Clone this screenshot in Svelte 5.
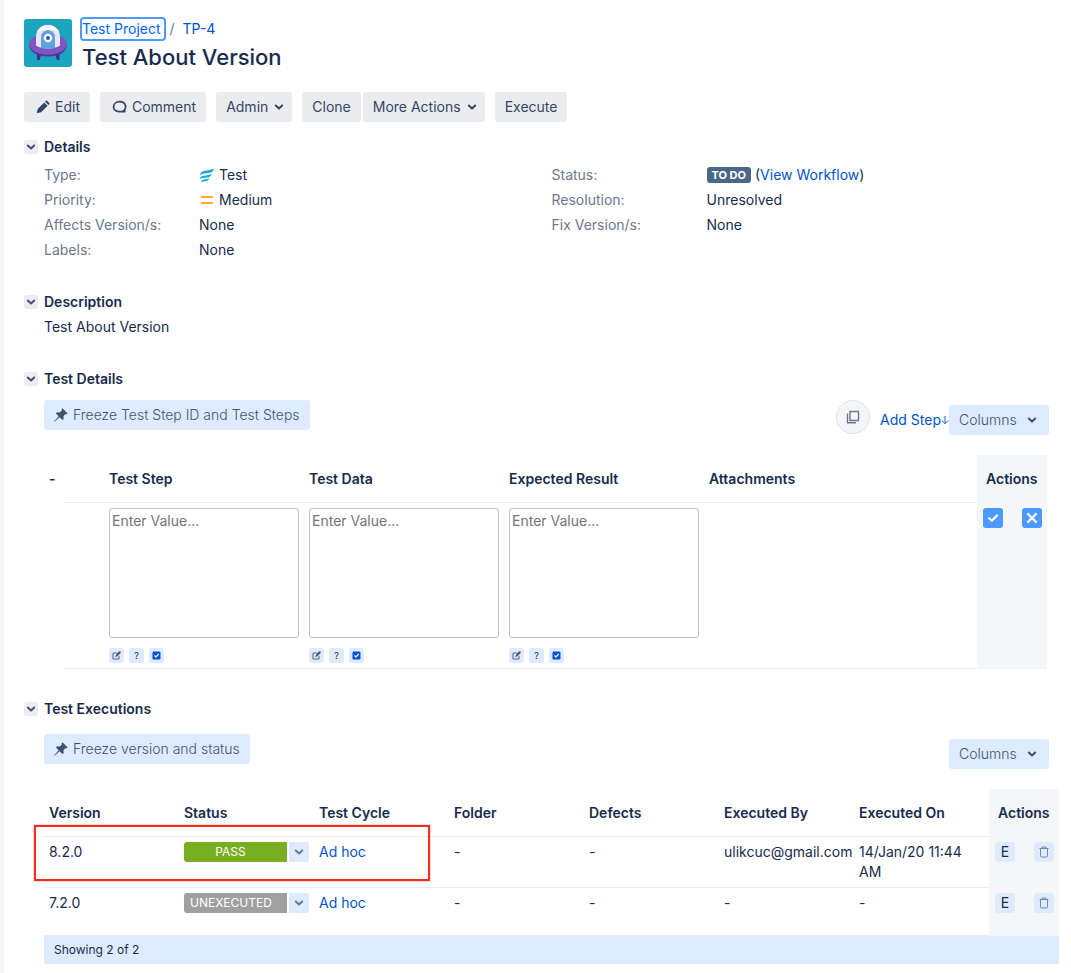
<script>
  const leftFields = [
    { label: 'Type:', value: 'Test', icon: 'test' },
    { label: 'Priority:', value: 'Medium', icon: 'medium' },
    { label: 'Affects Version/s:', value: 'None' },
    { label: 'Labels:', value: 'None' }
  ];
  const inputs = ['Test Step', 'Test Data', 'Expected Result'];
  const executions = [
    { version: '8.2.0', status: 'PASS', by: 'ulikcuc@gmail.com', on: '14/Jan/20 11:44 AM' },
    { version: '7.2.0', status: 'UNEXECUTED', by: '-', on: '-' }
  ];
  let open = $state({ details: true, description: true, steps: true, executions: true });
</script>

{#snippet chevron()}
  <svg class="chevron" viewBox="0 0 10 10" width="10" height="10" aria-hidden="true">
    <path d="M1.8 3.5 5 6.5 8.2 3.5" fill="none" stroke="currentColor" stroke-width="2" stroke-linecap="round" stroke-linejoin="round" />
  </svg>
{/snippet}

{#snippet pin()}
  <svg viewBox="0 0 14 14" width="14" height="14" aria-hidden="true">
    <path d="M8.4.3 13.7 5.6 12.4 6.4 11.6 6.1 9.4 8.3 9.7 11 8.6 12.1 5.6 9.2.4 13.8 0 13.4 4.7 8.3 1.9 5.4 3 4.3 5.7 4.6 7.9 2.4 7.5 1.5Z" fill="currentColor" />
  </svg>
{/snippet}

{#snippet heading(key, text)}
  <div class="heading">
    <button class="toggle" aria-label={text} aria-expanded={open[key]} onclick={() => (open[key] = !open[key])}>{@render chevron()}</button>
    <h2>{text}</h2>
  </div>
{/snippet}

<main>
  <header>
    <svg class="avatar" viewBox="0 0 48 48" width="48" height="48" aria-hidden="true">
      <rect width="48" height="48" rx="3" fill="#1ba5bf" />
      <path d="M13 34h3.500v4l-1 3H13zM32 34h3.500v7H33l-1-3z" fill="#452a92" />
      <path d="M5 25c0 8 8 12.500 19 12.500S43 33 43 25Z" fill="#5335a2" />
      <ellipse cx="24" cy="25" rx="19" ry="10.500" fill="#7e57c2" />
      <path d="M12 26.500V18c0-16 24-16 24 0v8.500c-5 4-19 4-24 0Z" fill="#e9e3f4" />
      <path d="M12.800 13.500c3.200-10 19.200-10 22.400 0-5-4-17.400-4-22.400 0Z" fill="#fff" />
      <path d="M17 29V18c0-9 14-9 14 0v11c-4 1-10 1-14 0Z" fill="#5da3dc" />
      <circle cx="24" cy="19" r="4.200" fill="#fff" />
      <circle cx="24" cy="19" r="2" fill="#315a9d" />
    </svg>
    <div>
      <nav aria-label="Breadcrumb"><a class="focused" href="#project">Test Project</a><span>/</span><a href="#issue">TP-4</a></nav>
      <h1>Test About Version</h1>
    </div>
  </header>

  <div class="operations">
    <button class="op with-icon">
      <svg viewBox="0 0 14 14" width="14" height="14" aria-hidden="true">
        <path d="M.7 13.300 1.700 8.900 8.200 2.400 11.600 5.800 5.100 12.300ZM9 1.600l.9-.9q.6-.6 1.200 0l2.200 2.200q.6.6 0 1.200l-.9.9Z" fill="currentColor" />
      </svg>Edit
    </button>
    <button class="op with-icon">
      <svg viewBox="0 0 15 14" width="15" height="14" aria-hidden="true">
        <path d="M11.300 11.100c4-3 2.700-9.400-3.800-9.400C.1 1.700-.9 11.700 7.500 11.700h5.400q-1.500-.3-1.600-1.600" fill="none" stroke="currentColor" stroke-width="1.700" stroke-linejoin="round" />
      </svg>Comment
    </button>
    <button class="op menu">Admin {@render chevron()}</button>
    <div class="joined">
      <button class="op">Clone</button>
      <button class="op menu">More Actions {@render chevron()}</button>
    </div>
    <button class="op">Execute</button>
  </div>

  <section class="details">
    {@render heading('details', 'Details')}
    {#if open.details}
      <div class="fields">
        <dl>
          {#each leftFields as field}
            <div>
              <dt>{field.label}</dt>
              <dd>
                {#if field.icon === 'test'}
                  <svg viewBox="0 0 16 16" width="16" height="16" aria-hidden="true">
                    <g fill="#1ca9dc">
                      <path d="M1 8C2 2.500 8 4.500 15 1.500c-1 6-8 3.500-14 6.500Z" />
                      <path d="M.8 12c1-4.700 6-2.600 12-5-1.200 5-6.500 2.700-12 5Z" />
                      <path d="M2 15.300c.8-3.800 4-2.100 8.200-4-1 4-4.500 2.300-8.200 4Z" />
                    </g>
                  </svg>
                {:else if field.icon === 'medium'}
                  <svg viewBox="0 0 16 16" width="16" height="16" aria-hidden="true">
                    <path d="M2 5h12M2 11h12" stroke="#ffab2b" stroke-width="2" />
                  </svg>
                {/if}
                {field.value}
              </dd>
            </div>
          {/each}
        </dl>
        <dl>
          <div><dt>Status:</dt><dd><span class="lozenge">TO DO</span><span>(<a href="#workflow">View Workflow</a>)</span></dd></div>
          <div><dt>Resolution:</dt><dd>Unresolved</dd></div>
          <div><dt>Fix Version/s:</dt><dd>None</dd></div>
        </dl>
      </div>
    {/if}
  </section>

  <section class="description">
    {@render heading('description', 'Description')}
    {#if open.description}<p>Test About Version</p>{/if}
  </section>

  <section class="steps">
    {@render heading('steps', 'Test Details')}
    {#if open.steps}
      <div class="toolbar">
        <button class="soft">{@render pin()}Freeze Test Step ID and Test Steps</button>
        <div class="right">
          <button class="round" aria-label="Expand">
            <svg viewBox="0 0 14 14" width="14" height="14" aria-hidden="true">
              <path d="M4 1.500h8.500v9H4ZM1.500 3.500v9.300H10" fill="none" stroke="currentColor" stroke-width="1.400" />
            </svg>
          </button>
          <a class="add" href="#add">Add Step<svg viewBox="0 0 9 10" width="8" height="10" aria-hidden="true"><path d="M4.500.5v8.500M.8 5.500l3.700 3.700 3.700-3.700" fill="none" stroke="currentColor" /></svg></a>
          <button class="soft columns">Columns {@render chevron()}</button>
        </div>
      </div>
      <table class="step-table">
        <colgroup><col class="c-dash" /><col class="c-order" /><col class="c-input" /><col class="c-input" /><col class="c-input" /><col /><col class="c-actions" /></colgroup>
        <thead>
          <tr><th class="bare">-</th><th></th>{#each inputs as name}<th>{name}</th>{/each}<th>Attachments</th><th class="actions">Actions</th></tr>
        </thead>
        <tbody>
          <tr>
            <td class="bare"></td><td></td>
            {#each inputs as name}
              <td>
                <textarea aria-label={name} placeholder="Enter Value..."></textarea>
                <div class="tools">
                  <button aria-label="Edit {name}">
                    <svg viewBox="0 0 9 9" width="9" height="9" aria-hidden="true"><path d="M5 2H1v6h6V5M4 5.300 8 1" fill="none" stroke="#42526e" stroke-width=".9" /><path d="M6.500.8 8.500 0v2.200L5 5.500 3.500 5.800 4 4Z" fill="#42526e" /></svg>
                  </button>
                  <button aria-label="Help for {name}">?</button>
                  <button aria-label="Preview {name}">
                    <svg viewBox="0 0 9 9" width="9" height="9" aria-hidden="true"><rect x=".5" y=".5" width="8" height="8" rx="1.200" fill="#0052cc" /><path d="M2.500 4.500 4 6l2.700-3" fill="none" stroke="#fff" stroke-width="1.200" /></svg>
                  </button>
                </div>
              </td>
            {/each}
            <td></td>
            <td class="actions">
              <div class="pair">
                <button class="solid" aria-label="Save step"><svg viewBox="0 0 12 12" width="12" height="12" aria-hidden="true"><path d="M2 6.200 4.800 8.700 10 3.500" fill="none" stroke="#fff" stroke-width="2.200" stroke-linecap="round" stroke-linejoin="round" /></svg></button>
                <button class="solid" aria-label="Cancel step"><svg viewBox="0 0 12 12" width="12" height="12" aria-hidden="true"><path d="M2 2l8 8M10 2l-8 8" stroke="#fff" stroke-width="2.200" stroke-linecap="round" /></svg></button>
              </div>
            </td>
          </tr>
        </tbody>
      </table>
    {/if}
  </section>

  <section class="executions">
    {@render heading('executions', 'Test Executions')}
    {#if open.executions}
      <div class="toolbar">
        <button class="soft">{@render pin()}Freeze version and status</button>
        <div class="right"><button class="soft columns">Columns {@render chevron()}</button></div>
      </div>
      <div class="framed">
        <table class="run-table">
          <colgroup><col span="7" /><col class="c-actions" /></colgroup>
          <thead>
            <tr><th>Version</th><th>Status</th><th>Test Cycle</th><th>Folder</th><th>Defects</th><th>Executed By</th><th>Executed On</th><th class="actions">Actions</th></tr>
          </thead>
          <tbody>
            {#each executions as run}
              <tr>
                <td>{run.version}</td>
                <td>
                  <div class="status">
                    <span class:pass={run.status === 'PASS'}>{run.status}</span>
                    <button aria-label="Change status of {run.version}">{@render chevron()}</button>
                  </div>
                </td>
                <td><a href="#cycle">Ad hoc</a></td>
                <td>-</td>
                <td>-</td>
                <td class="nowrap">{run.by}</td>
                <td>{run.on}</td>
                <td class="actions">
                  <div class="pair">
                    <button class="pale">E</button>
                    <button class="pale" aria-label="Delete execution">
                      <svg viewBox="0 0 10 12" width="10" height="12" aria-hidden="true"><path d="M.5 2.500h9M3 2.500V1h4v1.500M1.500 2.500v7.300q0 1.200 1.200 1.200h4.600q1.200 0 1.200-1.200V2.500" fill="none" stroke="#7a869a" /></svg>
                    </button>
                  </div>
                </td>
              </tr>
            {/each}
          </tbody>
        </table>
        <div class="highlight"></div>
      </div>
      <footer>Showing 2 of 2</footer>
    {/if}
  </section>
</main>

<style>
  :global(body) {
    margin: 0;
    background: #fff;
  }
  main {
    box-sizing: border-box;
    border-left: 4px solid #f4f5f7;
    padding: 19px 12px 10px 20px;
    font-family: Inter, sans-serif;
    font-size: 14px;
    line-height: 20px;
    color: #172b4d;
  }
  a {
    color: #0052cc;
    text-decoration: none;
  }
  h1, h2, p, dl, dd {
    margin: 0;
  }
  button {
    border: 0;
    margin: 0;
    padding: 0;
    font: inherit;
    color: inherit;
    cursor: pointer;
  }
  svg {
    flex: none;
  }
  header {
    display: flex;
    gap: 10px;
  }
  nav {
    display: flex;
    gap: 6px;
  }
  nav span {
    color: #6b778c;
    margin-right: 2px;
  }
  .focused {
    border-radius: 2px;
    box-shadow: 0 0 0 2px #4c9aff;
    color: #0065ff;
    padding-right: 3px;
  }
  h1 {
    font-size: 22px;
    font-weight: 500;
    line-height: 28px;
    margin-top: 4px;
  }
  .operations {
    display: flex;
    gap: 10px;
    margin-top: 21px;
  }
  .joined {
    display: flex;
    gap: 2px;
  }
  .op {
    display: flex;
    align-items: center;
    gap: 5px;
    height: 30px;
    padding: 0 10px;
    border-radius: 3px;
    background: #ebecf0;
    color: #344563;
    white-space: nowrap;
  }
  .with-icon {
    padding-left: 12px;
  }
  .menu {
    gap: 6px;
    padding-right: 8px;
  }
  section {
    padding-left: 20px;
  }
  .heading {
    display: flex;
    align-items: center;
    gap: 6px;
    margin-left: -20px;
  }
  .toggle {
    display: grid;
    place-items: center;
    width: 14px;
    height: 14px;
    border-radius: 3px;
    background: #ebecf0;
    color: #42526e;
  }
  h2 {
    font-size: 14px;
    font-weight: 600;
  }
  .details {
    margin-top: 15px;
  }
  .fields {
    display: grid;
    grid-template-columns: 1fr 1fr;
    padding-top: 5px;
  }
  dl div {
    display: flex;
    height: 25px;
    line-height: 25px;
  }
  dt {
    flex: 0 0 155px;
    color: #6b778c;
  }
  dd {
    display: flex;
    align-items: center;
    gap: 4px;
  }
  .lozenge {
    padding: 0 5px;
    border-radius: 3px;
    background: #4a6785;
    color: #fff;
    font-size: 11px;
    font-weight: 700;
    line-height: 16px;
  }
  .description {
    margin-top: 30px;
  }
  .description p {
    margin-top: 5px;
  }
  .steps {
    margin-top: 32px;
  }
  .toolbar {
    display: flex;
    justify-content: space-between;
    align-items: flex-start;
    margin: 11px 10px 0 0;
  }
  .executions .toolbar {
    margin-top: 15px;
  }
  .right {
    display: flex;
    align-items: center;
    padding-top: 5px;
  }
  .steps .right {
    height: 30px;
  }
  .soft {
    display: flex;
    align-items: center;
    gap: 5px;
    height: 30px;
    padding: 0 10px;
    border-radius: 3px;
    background: #deebff;
    color: #42526e;
    font-weight: 300;
    white-space: nowrap;
  }
  .columns {
    justify-content: space-between;
    width: 100px;
    padding-right: 12px;
  }
  .round {
    display: grid;
    place-items: center;
    width: 34px;
    height: 34px;
    margin: -6px 10px 0 0;
    border: 1px solid #dfe1e6;
    border-radius: 50%;
    background: #f4f5f7;
    color: #6b778c;
  }
  .add {
    display: flex;
    align-items: center;
  }
  table {
    width: 100%;
    border-collapse: separate;
    border-spacing: 0;
    table-layout: fixed;
  }
  th, td {
    box-sizing: border-box;
    padding: 5px;
    text-align: left;
    vertical-align: top;
    border-bottom: 1px solid #ebecf0;
  }
  th {
    height: 48px;
    padding-top: 14px;
    font-weight: 600;
  }
  th.bare, td.bare {
    border-bottom-color: transparent;
  }
  th.actions, td.actions {
    background: #f4f6f8;
    border-bottom-color: #f4f6f8;
  }
  th.actions {
    padding-left: 9px;
  }
  .step-table {
    width: calc(100% - 12px);
    margin-top: 20px;
  }
  .step-table tbody td {
    height: 166px;
  }
  .c-dash {
    width: 20px;
  }
  .c-order {
    width: 40px;
  }
  .c-input {
    width: 200px;
  }
  .c-actions {
    width: 70px;
  }
  textarea {
    display: block;
    box-sizing: border-box;
    width: 100%;
    height: 130px;
    padding: 2px;
    border: 1px solid #c1c1c1;
    border-radius: 3px;
    font: inherit;
    resize: none;
  }
  textarea::placeholder {
    color: #757575;
  }
  .tools {
    display: flex;
    gap: 5px;
    margin-top: 10px;
  }
  .tools button {
    display: grid;
    place-items: center;
    width: 15px;
    height: 15px;
    border-radius: 3px;
    background: #deebff;
    font-size: 9px;
    line-height: 15px;
  }
  .pair {
    display: flex;
    justify-content: space-between;
    margin-left: 1px;
  }
  .solid, .pale {
    display: grid;
    place-items: center;
    width: 20px;
    height: 20px;
    border-radius: 3px;
    background: #4c9aff;
  }
  .pale {
    background: #deebff;
  }
  .executions {
    margin-top: 30px;
  }
  .framed {
    position: relative;
    margin-top: 20px;
  }
  .run-table tbody tr:last-child td {
    height: 48px;
  }
  .nowrap {
    white-space: nowrap;
  }
  .status {
    display: flex;
    gap: 2px;
  }
  .status span {
    flex: 1;
    border-radius: 3px 0 0 3px;
    background: #a0a0a0;
    color: #fff;
    font-size: 12px;
    padding-left: 6px;
  }
  .status .pass {
    background: #78ae20;
    padding: 0 10px 0 0;
    text-align: center;
  }
  .status button {
    display: grid;
    place-items: center;
    width: 20px;
    height: 20px;
    border-radius: 0 3px 3px 0;
    background: #deebff;
    color: #6b778c;
  }
  .highlight {
    position: absolute;
    top: 36px;
    left: -10px;
    box-sizing: border-box;
    width: 396px;
    height: 56px;
    border: 2px solid #f52d1c;
    box-shadow: 0 0 1px #f52d1c;
    pointer-events: none;
  }
  footer {
    padding: 4px 10px;
    border-radius: 0 0 3px 3px;
    background: #deebff;
    font-size: 12px;
  }
</style>
